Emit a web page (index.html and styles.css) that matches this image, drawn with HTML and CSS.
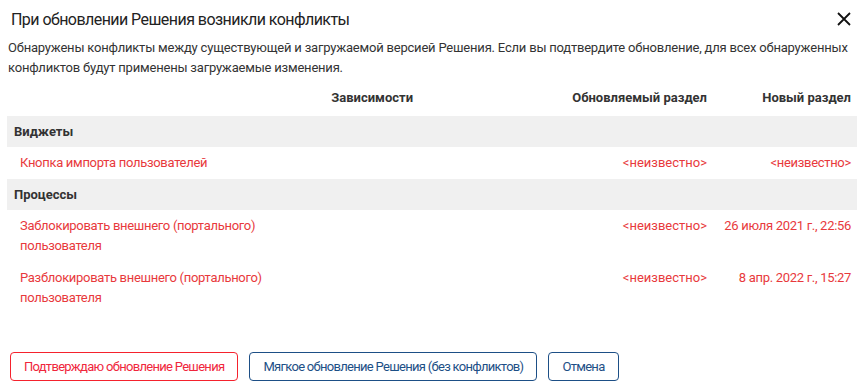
FILE: index.html
```html
<!DOCTYPE html>
<html lang="ru">
<head>
    <meta charset="UTF-8">
    <meta name="viewport" content="width=device-width, initial-scale=1.0">
    <title>Конфликты обновления</title>
    <link rel="stylesheet" href="styles.css">
</head>
<body>

    <div class="dialog">
        <div class="dialog-head">
            <h1 class="dialog-title">При обновлении Решения возникли конфликты</h1>
            <button class="close-btn" title="Закрыть">
                <svg width="14" height="14" viewBox="0 0 14 14">
                    <path d="M1 1 L13 13 M13 1 L1 13" stroke="#111" stroke-width="1.8" fill="none"/>
                </svg>
            </button>
        </div>

        <p class="dialog-text">Обнаружены конфликты между существующей и загружаемой версией Решения. Если вы подтвердите обновление, для всех обнаруженных конфликтов будут применены загружаемые изменения.</p>

        <div class="conflicts">
            <div class="row row-head">
                <div class="c-name">Зависимости</div>
                <div class="c-old">Обновляемый раздел</div>
                <div class="c-new">Новый раздел</div>
            </div>

            <div class="group">Виджеты</div>
            <div class="row">
                <div class="c-name">Кнопка импорта пользователей</div>
                <div class="c-old">&lt;неизвестно&gt;</div>
                <div class="c-new">&lt;неизвестно&gt;</div>
            </div>

            <div class="group">Процессы</div>
            <div class="row">
                <div class="c-name">Заблокировать внешнего (портального) пользователя</div>
                <div class="c-old">&lt;неизвестно&gt;</div>
                <div class="c-new">26 июля 2021 г., 22:56</div>
            </div>
            <div class="row">
                <div class="c-name">Разблокировать внешнего (портального) пользователя</div>
                <div class="c-old">&lt;неизвестно&gt;</div>
                <div class="c-new">8 апр. 2022 г., 15:27</div>
            </div>
        </div>

        <div class="dialog-buttons">
            <button class="btn btn-danger">Подтверждаю обновление Решения</button>
            <button class="btn">Мягкое обновление Решения (без конфликтов)</button>
            <button class="btn">Отмена</button>
        </div>
    </div>

</body>
</html>
```

FILE: styles.css
```css
body {
    margin: 0;
    font-family: 'Roboto', 'Liberation Sans', sans-serif;
    font-size: 13px;
    letter-spacing: -0.3px;
    color: #222;
    background: #fff;
}

.dialog {
    padding: 0 8px 0 7px;
}

.dialog-head {
    display: flex;
    justify-content: space-between;
    align-items: center;
    height: 38px;
}

.dialog-title {
    margin: 0 0 0 4px;
    font-size: 16px;
    font-weight: normal;
    letter-spacing: -0.55px;
    color: #222;
}

.close-btn {
    border: none;
    background: none;
    padding: 0;
    margin-right: 6px;
    width: 14px;
    height: 14px;
    cursor: pointer;
}

.close-btn svg {
    display: block;
}

.dialog-text {
    margin: 0 0 0 1px;
    line-height: 20px;
    letter-spacing: -0.2px;
    color: #333;
}

.conflicts {
    margin-top: 10px;
}

.row {
    display: flex;
    padding: 6px 6px 6px 0;
    line-height: 20px;
    color: #e8393c;
}

.row-head {
    color: #333;
    font-weight: bold;
    letter-spacing: 0;
    padding: 0 6px 8px 0;
}

.c-name {
    width: 406px;
    box-sizing: border-box;
    padding: 0 130px 0 13px;
}

.row-head .c-name {
    padding: 0;
    text-align: right;
}

.c-old {
    flex: 1;
    text-align: right;
    letter-spacing: 0;
}

.c-new {
    width: 144px;
    text-align: right;
}

.group {
    background: #f0f0f0;
    height: 31px;
    line-height: 31px;
    padding-left: 7px;
    font-weight: bold;
    letter-spacing: 0;
    color: #333;
}

.dialog-buttons {
    display: flex;
    gap: 11px;
    margin-top: 38px;
    padding-left: 3px;
}

.btn {
    height: 29px;
    padding: 0 13px;
    font-family: inherit;
    font-size: 13px;
    letter-spacing: -0.7px;
    color: #1d4f86;
    background: #fff;
    border: 1px solid #1d4f86;
    border-radius: 4px;
    cursor: pointer;
}

.btn-danger {
    color: #f0263c;
    border-color: #f5222d;
}
```
